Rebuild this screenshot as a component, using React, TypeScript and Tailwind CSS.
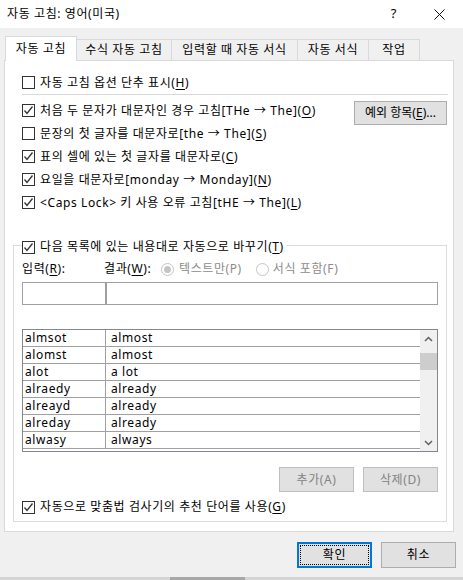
import React from "react";

const FONT = { fontFamily: '"Noto Sans", "Noto Sans CJK KR", sans-serif' };

type Entry = [string, string];

const ENTRIES: Entry[] = [
  ["almsot", "almost"],
  ["alomst", "almost"],
  ["alot", "a lot"],
  ["alraedy", "already"],
  ["alreayd", "already"],
  ["alreday", "already"],
  ["alwasy", "always"],
];

const TABS = [
  { label: "자동 고침", w: "w-[72px]" },
  { label: "수식 자동 고침", w: "w-[96px]" },
  { label: "입력할 때 자동 서식", w: "w-[127px]" },
  { label: "자동 서식", w: "w-[72px]" },
  { label: "작업", w: "w-[52px]" },
];

function CheckBox({ checked }: { checked: boolean }) {
  return (
    <span className="flex h-[13px] w-[13px] shrink-0 items-center justify-center border border-[#333] bg-white">
      {checked && (
        <svg width="11" height="11" viewBox="0 0 11 11">
          <polyline points="1.5,5.5 4,8.5 9.5,1.5" fill="none" stroke="#333" strokeWidth="1.3" />
        </svg>
      )}
    </span>
  );
}

function Radio({ checked }: { checked: boolean }) {
  return (
    <span className="flex h-[13px] w-[13px] shrink-0 items-center justify-center rounded-full border border-[#c4c4c4] bg-white">
      {checked && <span className="h-[7px] w-[7px] rounded-full bg-[#c4c4c4]" />}
    </span>
  );
}

// label text with the mnemonic letter underlined, e.g. "(H)"
function Mn({ text, k, tail = "" }: { text: string; k: string; tail?: string }) {
  return (
    <span className="whitespace-pre">
      {text}(<u className="underline-offset-2">{k}</u>){tail}
    </span>
  );
}

function CheckRow({ checked, children }: { checked: boolean; children: React.ReactNode }) {
  return (
    <div className="flex h-[23px] items-center gap-[5px]">
      <CheckBox checked={checked} />
      {children}
    </div>
  );
}

function Btn({ children, w, disabled }: { children: React.ReactNode; w: string; disabled?: boolean }) {
  return (
    <div
      className={`flex h-[25px] ${w} items-center justify-center border ${
        disabled ? "border-[#bfbfbf] bg-[#e1e1e1] text-[#838383]" : "border-[#adadad] bg-[#e1e1e1] text-black"
      }`}
    >
      {children}
    </div>
  );
}

function ReplaceList() {
  return (
    <div className="mt-[24px] flex h-[123px] border border-[#828790] bg-white">
      <div className="flex-1">
        {ENTRIES.map(([from, to]) => (
          <div key={from} className="flex h-[17px] border-b border-[#a0a0a0] leading-[16px]">
            <div className="w-[83px] border-r border-[#a0a0a0] pl-[2px]">{from}</div>
            <div className="flex-1 pl-[5px]">{to}</div>
          </div>
        ))}
      </div>
      <div className="flex w-[17px] flex-col bg-[#f0f0f0]">
        <div className="flex h-[17px] items-center justify-center">
          <svg width="9" height="6" viewBox="0 0 9 6">
            <polyline points="1,5 4.5,1.5 8,5" fill="none" stroke="#606060" strokeWidth="1.5" />
          </svg>
        </div>
        <div className="mt-[6px] h-[17px] bg-[#cdcdcd]" />
        <div className="flex-1" />
        <div className="flex h-[17px] items-center justify-center">
          <svg width="9" height="6" viewBox="0 0 9 6">
            <polyline points="1,1 4.5,4.5 8,1" fill="none" stroke="#606060" strokeWidth="1.5" />
          </svg>
        </div>
      </div>
    </div>
  );
}

export default function App() {
  return (
    <div
      className="flex h-[580px] w-[463px] flex-col bg-[#f0f0f0] text-[12px] tracking-[0.6px] text-black"
      style={FONT}
    >
      {/* title bar */}
      <div className="flex h-[28px] shrink-0 items-center bg-white">
        <span className="pl-[7px]">자동 고침: 영어(미국)</span>
        <span className="ml-auto mr-[37px] text-[13px]">?</span>
        <svg className="mr-[18px]" width="11" height="11" viewBox="0 0 11 11">
          <path d="M0.5 0.5 L10.5 10.5 M10.5 0.5 L0.5 10.5" stroke="#111" strokeWidth="1" />
        </svg>
      </div>

      {/* tabs */}
      <div className="mt-[8px] flex h-[24px] items-end pl-[5px]">
        {TABS.map((t, i) =>
          i === 0 ? (
            <div
              key={t.label}
              className={`relative z-10 -mb-px flex h-[25px] ${t.w} items-start justify-center border-x border-t border-[#d9d9d9] bg-white pt-[3px]`}
            >
              {t.label}
            </div>
          ) : (
            <div
              key={t.label}
              className={`-ml-px flex h-[21px] ${t.w} items-center justify-center border-x border-t border-[#d9d9d9] bg-[#f0f0f0]`}
            >
              {t.label}
            </div>
          )
        )}
      </div>

      {/* tab page */}
      <div className="ml-[4px] w-[450px] border border-[#d9d9d9] bg-white pl-[8px] pr-[6px] pt-[10px] pb-[9px]">
        <div className="pl-[9px]">
          <CheckRow checked={false}>
            <Mn text="자동 고침 옵션 단추 표시" k="H" />
          </CheckRow>
        </div>
        <div className="ml-[9px] -mr-px h-px bg-[#d9d9d9]" />

        <div className="mt-[4px] flex items-start pl-[9px]">
          <div className="flex-1">
            <CheckRow checked>
              <Mn text="처음 두 문자가 대문자인 경우 고침[THe → The]" k="O" />
            </CheckRow>
            <CheckRow checked={false}>
              <Mn text="문장의 첫 글자를 대문자로[the → The]" k="S" />
            </CheckRow>
            <CheckRow checked>
              <Mn text="표의 셀에 있는 첫 글자를 대문자로" k="C" />
            </CheckRow>
            <CheckRow checked>
              <Mn text="요일을 대문자로[monday → Monday]" k="N" />
            </CheckRow>
            <CheckRow checked>
              <Mn text="<Caps Lock> 키 사용 오류 고침[tHE → The]" k="L" />
            </CheckRow>
          </div>
          <div className="mt-[2px] flex h-[24px] w-[93px] items-center justify-center border border-[#adadad] bg-[#e1e1e1] tracking-normal">
            <Mn text="예외 항목" k="E" tail="..." />
          </div>
        </div>

        {/* replace-as-you-type group */}
        <div className="mt-[31px] flex flex-col border border-[#dcdcdc] px-[8px] pb-[5px]">
          <div className="-mt-[8px] flex h-[18px] items-center gap-[5px] self-start bg-white pr-[2px]">
            <CheckBox checked />
            <Mn text="다음 목록에 있는 내용대로 자동으로 바꾸기" k="T" />
          </div>

          <div className="mt-[4px] flex h-[18px] items-center">
            <span className="w-[82px]">
              <Mn text="입력" k="R" tail=":" />
            </span>
            <span className="w-[57px]">
              <Mn text="결과" k="W" tail=":" />
            </span>
            <div className="flex items-center gap-[5px] text-[#8c8c8c]">
              <Radio checked />
              <span>텍스트만(P)</span>
            </div>
            <div className="ml-[14px] flex items-center gap-[4px] text-[#8c8c8c]">
              <Radio checked={false} />
              <span>서식 포함(F)</span>
            </div>
          </div>

          <div className="mt-[4px] flex h-[23px]">
            <div className="w-[84px] border border-[#a0a0a0] bg-white" />
            <div className="flex-1 border border-[#a0a0a0] bg-white" />
          </div>

          <ReplaceList />

          <div className="mt-[15px] flex justify-end gap-[9px]">
            <Btn w="w-[75px]" disabled>
              추가(A)
            </Btn>
            <Btn w="w-[75px]" disabled>
              삭제(D)
            </Btn>
          </div>

          <div className="mt-[6px] flex h-[18px] items-center gap-[5px]">
            <CheckBox checked />
            <Mn text="자동으로 맞춤법 검사기의 추천 단어를 사용" k="G" />
          </div>
        </div>
      </div>

      {/* dialog buttons */}
      <div className="mt-[10px] flex justify-end gap-[9px] pr-[7px]">
        <div className="flex h-[26px] w-[75px] items-center justify-center border-2 border-[#0078d7] bg-[#e1e1e1] p-[1px]">
          <div className="flex h-full w-full items-center justify-center border border-dotted border-black">확인</div>
        </div>
        <div className="flex h-[26px] w-[75px] items-center justify-center border border-[#adadad] bg-[#e1e1e1]">
          취소
        </div>
      </div>

      <div className="mt-auto flex h-[3px] bg-[#d4d4d4]">
        <div className="ml-[170px] h-full w-[75px] bg-[#a8a8a8]" />
      </div>
    </div>
  );
}
